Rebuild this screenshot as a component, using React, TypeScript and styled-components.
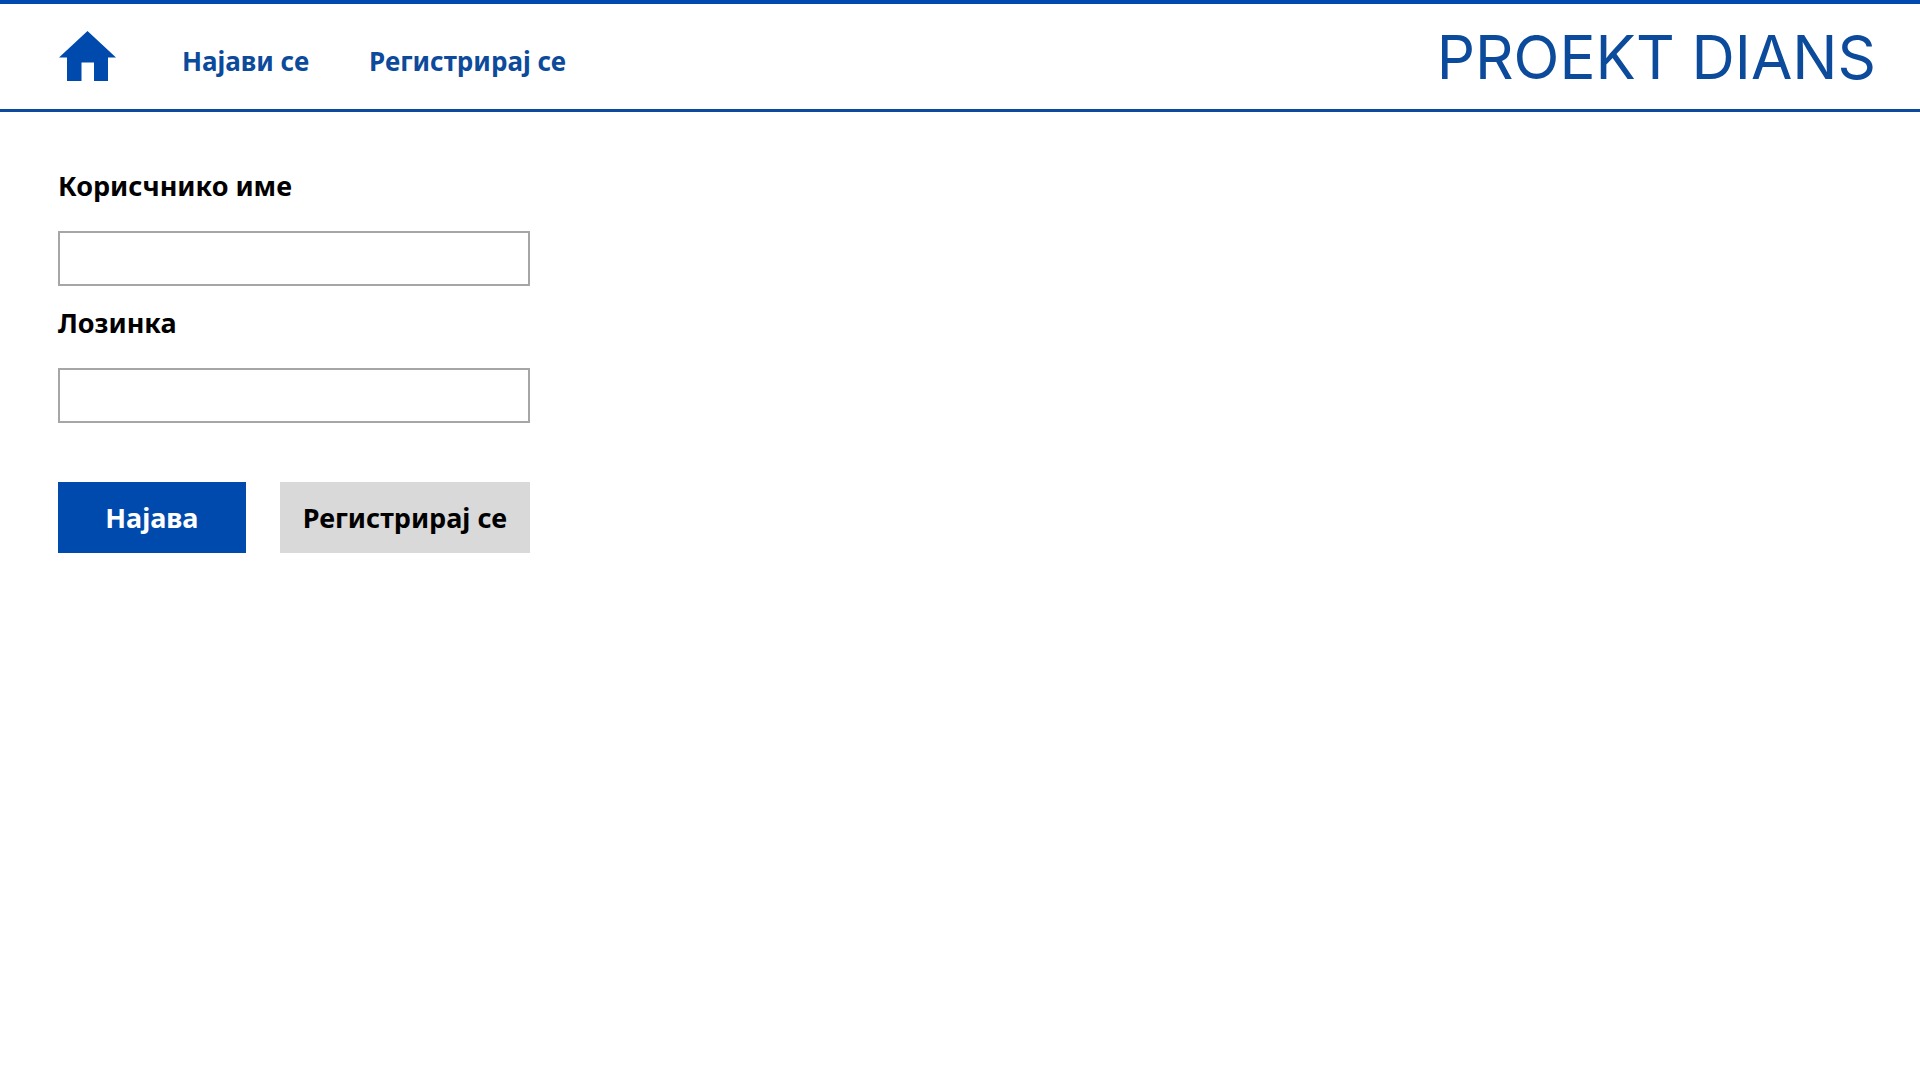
import React from "react";
import styled, { createGlobalStyle } from "styled-components";

const GlobalStyle = createGlobalStyle`
  *, *::before, *::after { box-sizing: border-box; }
  body {
    margin: 0;
    background: #fff;
    color: #000;
    font-family: "Noto Sans", "Open Sans", sans-serif;
    font-size: 27px;
    line-height: 36px;
  }
`;

const Header = styled.header`
  display: flex;
  align-items: center;
  justify-content: space-between;
  height: 112px;
  padding: 0 44px 0 59px;
  border-top: 4px solid #004aad;
  border-bottom: 3px solid #0c4a9b;
`;

const Nav = styled.nav`
  display: flex;
  align-items: center;
  gap: 60px;
  padding-bottom: 2px;
`;

const HomeLink = styled.a`
  display: flex;
  margin-right: 6px;
  color: #004aad;
`;

const NavLink = styled.a`
  padding-top: 10px;
  color: #0c4a9b;
  font-size: 26px;
  font-weight: 700;
  text-decoration: none;
`;

const Brand = styled.div`
  color: #0c4a9b;
  font-family: "Inter", sans-serif;
  font-size: 60px;
  font-weight: 400;
  line-height: 80px;
`;

const Form = styled.form`
  display: flex;
  flex-direction: column;
  gap: 19px;
  max-width: 530px;
  padding: 56px 0 0 58px;
`;

const Field = styled.div`
  display: flex;
  flex-direction: column;
  gap: 27px;
`;

const Label = styled.label`
  font-weight: 700;
`;

const Input = styled.input`
  width: 100%;
  height: 55px;
  padding: 0 16px;
  border: 2px solid #a6a6a6;
  border-radius: 0;
  background: #fff;
  font: inherit;
`;

const Actions = styled.div`
  display: flex;
  gap: 34px;
  margin-top: 40px;
`;

const Button = styled.button<{ $primary?: boolean }>`
  flex: ${(p) => (p.$primary ? "3 1 0" : "4 1 0")};
  height: 71px;
  padding: 0;
  border: 0;
  background: ${(p) => (p.$primary ? "#004aad" : "#d9d9d9")};
  color: ${(p) => (p.$primary ? "#fff" : "#000")};
  font: inherit;
  font-weight: 700;
  white-space: nowrap;
  cursor: pointer;
`;

export default function App() {
  return (
    <>
      <GlobalStyle />
      <Header>
        <Nav>
          <HomeLink href="#" aria-label="Дома">
            <svg width="57" height="50" viewBox="0 0 57 50" fill="currentColor" aria-hidden="true">
              <path d="M28.500 0 57 26.500H49V50H35V31.500H22.500V50H8V26.500H0Z" />
            </svg>
          </HomeLink>
          <NavLink href="#login">Најави се</NavLink>
          <NavLink href="#register">Регистрирај се</NavLink>
        </Nav>
        <Brand>PROEKT DIANS</Brand>
      </Header>
      <main>
        <Form onSubmit={(e) => e.preventDefault()}>
          <Field>
            <Label htmlFor="username">Корисчнико име</Label>
            <Input id="username" type="text" />
          </Field>
          <Field>
            <Label htmlFor="password">Лозинка</Label>
            <Input id="password" type="password" />
          </Field>
          <Actions>
            <Button type="submit" $primary>Најава</Button>
            <Button type="button">Регистрирај се</Button>
          </Actions>
        </Form>
      </main>
    </>
  );
}
